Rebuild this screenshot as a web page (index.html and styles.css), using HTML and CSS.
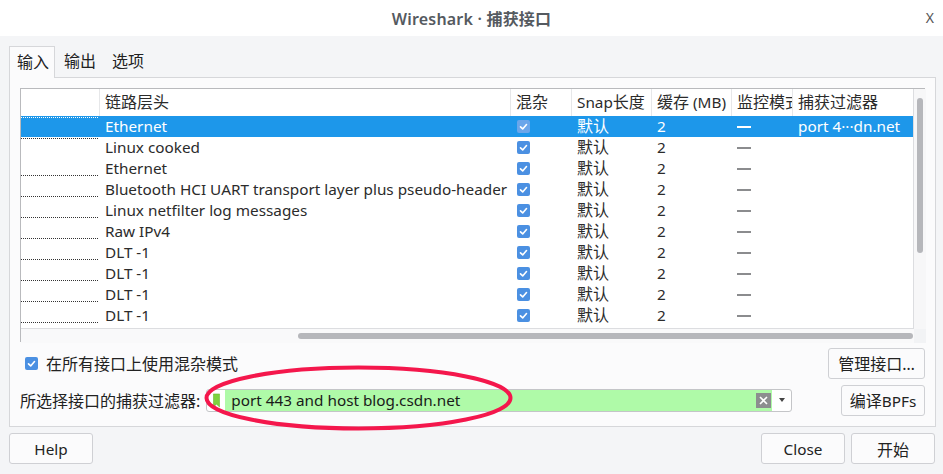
FILE: index.html
```html
<!DOCTYPE html>
<html lang="zh-CN">
<head>
<meta charset="utf-8">
<title>Wireshark · 捕获接口</title>
<link rel="stylesheet" href="styles.css">
</head>
<body>
<div class="window">
  <div class="titlebar">
    <div class="title">Wireshark · <span class="cj">捕获接口</span></div>
    <div class="close">X</div>
  </div>
  <div class="tabs">
    <div class="tab active cj">输入</div>
    <div class="tab cj">输出</div>
    <div class="tab cj">选项</div>
  </div>
  <div class="pane">
    <div class="table">
      <div class="viewport">
        <div class="row header">
          <div class="cell c0"></div>
          <div class="cell c1 cj">链路层头</div>
          <div class="cell c2 cj">混杂</div>
          <div class="cell c3">Snap<span class="cj">长度</span></div>
          <div class="cell c4"><span class="cj">缓存</span>&nbsp;(MB)</div>
          <div class="cell c5 cj">监控模式</div>
          <div class="cell c6 cj">捕获过滤器</div>
        </div>
        <div class="row selected">
          <div class="cell c0 line-top"><span class="dots"></span></div>
          <div class="cell c1">Ethernet</div>
          <div class="cell c2"><span class="check"><svg viewBox="0 0 13 13"><path d="M3.5 6.8l2.2 2.1 3.8-4.4" /></svg></span></div>
          <div class="cell c3 cj">默认</div>
          <div class="cell c4">2</div>
          <div class="cell c5"><span class="dash"></span></div>
          <div class="cell c6">port 4···dn.net</div>
        </div>
        <div class="row">
          <div class="cell c0 line-top"><span class="dots"></span></div>
          <div class="cell c1">Linux cooked</div>
          <div class="cell c2"><span class="check"><svg viewBox="0 0 13 13"><path d="M3.5 6.8l2.2 2.1 3.8-4.4" /></svg></span></div>
          <div class="cell c3 cj">默认</div>
          <div class="cell c4">2</div>
          <div class="cell c5"><span class="dash"></span></div>
          <div class="cell c6"></div>
        </div>
        <div class="row">
          <div class="cell c0"><span class="dots"></span></div>
          <div class="cell c1">Ethernet</div>
          <div class="cell c2"><span class="check"><svg viewBox="0 0 13 13"><path d="M3.5 6.8l2.2 2.1 3.8-4.4" /></svg></span></div>
          <div class="cell c3 cj">默认</div>
          <div class="cell c4">2</div>
          <div class="cell c5"><span class="dash"></span></div>
          <div class="cell c6"></div>
        </div>
        <div class="row">
          <div class="cell c0"><span class="dots"></span></div>
          <div class="cell c1">Bluetooth HCI UART transport layer plus pseudo-header</div>
          <div class="cell c2"><span class="check"><svg viewBox="0 0 13 13"><path d="M3.5 6.8l2.2 2.1 3.8-4.4" /></svg></span></div>
          <div class="cell c3 cj">默认</div>
          <div class="cell c4">2</div>
          <div class="cell c5"><span class="dash"></span></div>
          <div class="cell c6"></div>
        </div>
        <div class="row">
          <div class="cell c0"><span class="dots"></span></div>
          <div class="cell c1">Linux netfilter log messages</div>
          <div class="cell c2"><span class="check"><svg viewBox="0 0 13 13"><path d="M3.5 6.8l2.2 2.1 3.8-4.4" /></svg></span></div>
          <div class="cell c3 cj">默认</div>
          <div class="cell c4">2</div>
          <div class="cell c5"><span class="dash"></span></div>
          <div class="cell c6"></div>
        </div>
        <div class="row">
          <div class="cell c0"><span class="dots"></span></div>
          <div class="cell c1">Raw IPv4</div>
          <div class="cell c2"><span class="check"><svg viewBox="0 0 13 13"><path d="M3.5 6.8l2.2 2.1 3.8-4.4" /></svg></span></div>
          <div class="cell c3 cj">默认</div>
          <div class="cell c4">2</div>
          <div class="cell c5"><span class="dash"></span></div>
          <div class="cell c6"></div>
        </div>
        <div class="row">
          <div class="cell c0"><span class="dots"></span></div>
          <div class="cell c1">DLT -1</div>
          <div class="cell c2"><span class="check"><svg viewBox="0 0 13 13"><path d="M3.5 6.8l2.2 2.1 3.8-4.4" /></svg></span></div>
          <div class="cell c3 cj">默认</div>
          <div class="cell c4">2</div>
          <div class="cell c5"><span class="dash"></span></div>
          <div class="cell c6"></div>
        </div>
        <div class="row">
          <div class="cell c0"><span class="dots"></span></div>
          <div class="cell c1">DLT -1</div>
          <div class="cell c2"><span class="check"><svg viewBox="0 0 13 13"><path d="M3.5 6.8l2.2 2.1 3.8-4.4" /></svg></span></div>
          <div class="cell c3 cj">默认</div>
          <div class="cell c4">2</div>
          <div class="cell c5"><span class="dash"></span></div>
          <div class="cell c6"></div>
        </div>
        <div class="row">
          <div class="cell c0"><span class="dots"></span></div>
          <div class="cell c1">DLT -1</div>
          <div class="cell c2"><span class="check"><svg viewBox="0 0 13 13"><path d="M3.5 6.8l2.2 2.1 3.8-4.4" /></svg></span></div>
          <div class="cell c3 cj">默认</div>
          <div class="cell c4">2</div>
          <div class="cell c5"><span class="dash"></span></div>
          <div class="cell c6"></div>
        </div>
        <div class="row">
          <div class="cell c0"><span class="dots"></span></div>
          <div class="cell c1">DLT -1</div>
          <div class="cell c2"><span class="check"><svg viewBox="0 0 13 13"><path d="M3.5 6.8l2.2 2.1 3.8-4.4" /></svg></span></div>
          <div class="cell c3 cj">默认</div>
          <div class="cell c4">2</div>
          <div class="cell c5"><span class="dash"></span></div>
          <div class="cell c6"></div>
        </div>
      </div>
      <div class="vscroll"><span class="vthumb"></span></div>
      <div class="hscroll"><span class="hthumb"></span></div>
      <div class="corner"></div>
    </div>

    <div class="opt-row">
      <label class="promisc cj"><span class="check"><svg viewBox="0 0 13 13"><path d="M3.5 6.8l2.2 2.1 3.8-4.4" /></svg></span>在所有接口上使用混杂模式</label>
      <button class="btn btn-manage cj">管理接口…</button>
    </div>
    <div class="opt-row filter-row">
      <span class="filter-label cj">所选择接口的捕获过滤器:</span>
      <div class="combo">
        <span class="bookmark"><svg viewBox="0 0 8 16"><path d="M0.5 0.5h7v15l-3.5-3.2-3.5 3.2z" /></svg></span>
        <span class="combo-text">port 443 and host blog.csdn.net</span>
        <span class="clear"><svg viewBox="0 0 15 15"><path d="M4 4l7 7M11 4l-7 7" /></svg></span>
        <span class="arrow"></span>
      </div>
      <button class="btn btn-bpf"><span class="cj">编译</span>BPFs</button>
    </div>
  </div>

  <div class="footer">
    <button class="btn btn-foot">Help</button>
    <div class="foot-right">
      <button class="btn btn-foot">Close</button>
      <button class="btn btn-foot cj">开始</button>
    </div>
  </div>

  <svg class="annotation" viewBox="0 0 943 474" width="943" height="474">
    <ellipse cx="358.5" cy="398" rx="152" ry="30.5" />
  </svg>
</div>
</body>
</html>
```

FILE: styles.css
```css
* { box-sizing: border-box; }
html, body {
  margin: 0;
  padding: 0;
}
body {
  width: 943px;
  height: 474px;
  overflow: hidden;
  background: #f4f5f7;
  font-family: "Noto Sans", "Noto Sans CJK SC", sans-serif;
  font-size: 15.3px;
  color: #2b2b2b;
}
.cj { font-size: 16px; }
.window {
  position: relative;
  width: 943px;
  height: 474px;
  display: flex;
  flex-direction: column;
}
.titlebar {
  height: 36px;
  background: #ffffff;
  display: flex;
  align-items: center;
  justify-content: center;
  position: relative;
}
.title {
  font-size: 16px;
  font-weight: 600;
  color: #555a60;
  letter-spacing: 0.2px;
}
.close {
  position: absolute;
  right: 9px;
  top: 8px;
  font-size: 14px;
  color: #555;
}
.tabs {
  display: flex;
  padding: 10px 0 0 9px;
  height: 42px;
}
.tab {
  height: 32px;
  padding: 0 8px 0 8px;
  line-height: 31px;
  color: #222;
}
.tab.active {
  width: 46px;
  background: #fbfbfc;
  border: 1px solid #d6d7da;
  border-bottom: none;
  position: relative;
  z-index: 1;
  padding: 0 0 0 7px;
}
.tab:nth-child(2) { padding-left: 9px; }
.tab:nth-child(3) { padding-left: 8px; }
.pane {
  margin: -1px 7px 0 9px;
  height: 350px;
  background: #fbfbfc;
  border: 1px solid #d6d7da;
  padding: 10px 10px 10px 10px;
  display: flex;
  flex-direction: column;
}
.table {
  display: grid;
  grid-template-columns: 893px 12px;
  grid-template-rows: 240px 14px;
  height: 254px;
  border-left: 1px solid #b9babd;
  border-top: 1px solid #b9babd;
  background: #fff;
}
.viewport {
  overflow: hidden;
  border-bottom: 1px solid #dcdde0;
  border-right: 1px solid #dcdde0;
  background: #fff;
}
.row {
  display: grid;
  grid-template-columns: 79px 411px 61px 80px 80px 61px 120px;
  height: 21px;
  align-items: center;
}
.row.header {
  height: 27px;
}
.cell {
  padding-left: 5px;
  white-space: nowrap;
  overflow: hidden;
  height: 100%;
  display: flex;
  align-items: center;
  line-height: 21px;
}
.header .cell {
  border-right: 1px solid #e6e7e9;
}
.header .cell.c6 { border-right: none; }
.cell.c0 {
  padding-left: 0;
  align-items: flex-end;
  padding-bottom: 3px;
}
.cell.c0.line-top {
  align-items: flex-start;
  padding-bottom: 0;
  padding-top: 1px;
}
.dots {
  display: block;
  width: 77px;
  height: 0;
  border-bottom: 1px dotted #333;
}
.row.selected {
  background: #1d97ea;
  color: #fff;
}
.row.selected .dots { border-bottom-color: #fff; }
.check {
  display: inline-flex;
  flex: none;
  width: 13px;
  height: 13px;
  border-radius: 2px;
  background: #4b90e2;
  margin-left: 1px;
}
.check svg {
  width: 13px;
  height: 13px;
  fill: none;
  stroke: #fff;
  stroke-width: 1.6;
  stroke-linecap: round;
  stroke-linejoin: round;
}
.row.selected .check { background: #6ba6ea; }
.dash {
  display: inline-block;
  width: 14px;
  height: 0;
  border-top: 2px solid #8b8c8e;
}
.row.selected .dash { border-top-color: #fff; }
.vscroll {
  background: #f7f7f8;
  position: relative;
  display: flex;
  justify-content: center;
  padding-top: 9px;
}
.vthumb {
  display: block;
  width: 6px;
  height: 155px;
  border-radius: 3px;
  background: #b6b7bb;
}
.hscroll {
  background: #f9f9fa;
  padding: 4px 0 0 277px;
}
.hthumb {
  display: block;
  width: 615px;
  height: 6px;
  border-radius: 3px;
  background: #b6b7bb;
}
.corner { background: #f2f3f5; }
.opt-row {
  display: flex;
  align-items: center;
  justify-content: space-between;
  margin-top: 5px;
  height: 32px;
}
.filter-row {
  justify-content: flex-start;
  margin-top: 5px;
}
.promisc {
  display: flex;
  align-items: center;
  padding-left: 4px;
  gap: 8px;
  color: #222;
}
.btn {
  font-family: inherit;
  font-size: 15.3px;
  color: #222;
  background: #fbfbfc;
  border: 1px solid #cfd0d4;
  border-radius: 3px;
  height: 31px;
  padding: 0;
  margin: 0;
}
.btn.cj { font-size: 16px; }
.btn-manage { width: 97px; margin-right: 0; }
.btn-bpf { width: 84px; margin-left: auto; }
.filter-label {
  color: #222;
  margin-right: 6px;
}
.combo {
  width: 586px;
  height: 23px;
  border: 1px solid #c4c5c8;
  border-radius: 3px;
  background: #fff;
  display: flex;
  align-items: center;
}
.bookmark {
  width: 18px;
  height: 100%;
  display: flex;
  align-items: center;
  justify-content: center;
}
.bookmark svg {
  width: 7px;
  height: 15px;
  fill: #7ed23e;
  stroke: #62b22a;
  stroke-width: 0.6;
}
.combo-text {
  flex: 1;
  height: 100%;
  background: #affaa8;
  padding-left: 6px;
  line-height: 21px;
  color: #1a1a1a;
}
.clear {
  width: 17px;
  height: 100%;
  background: #affaa8;
  display: flex;
  align-items: center;
  justify-content: center;
}
.clear svg {
  width: 15px;
  height: 15px;
  background: #8c8d8f;
  fill: none;
  stroke: #fff;
  stroke-width: 1.6;
}
.arrow {
  width: 19px;
  display: flex;
  justify-content: center;
}
.arrow::before {
  content: "";
  border-left: 3.5px solid transparent;
  border-right: 3.5px solid transparent;
  border-top: 4px solid #444;
}
.footer {
  display: flex;
  justify-content: space-between;
  padding: 6px 8px 0 9px;
}
.foot-right {
  display: flex;
  gap: 6px;
}
.btn-foot {
  width: 84px;
  height: 31px;
}
.annotation {
  position: absolute;
  left: 0;
  top: 0;
  pointer-events: none;
}
.annotation ellipse {
  fill: none;
  stroke: #f4174c;
  stroke-width: 4;
}
```
